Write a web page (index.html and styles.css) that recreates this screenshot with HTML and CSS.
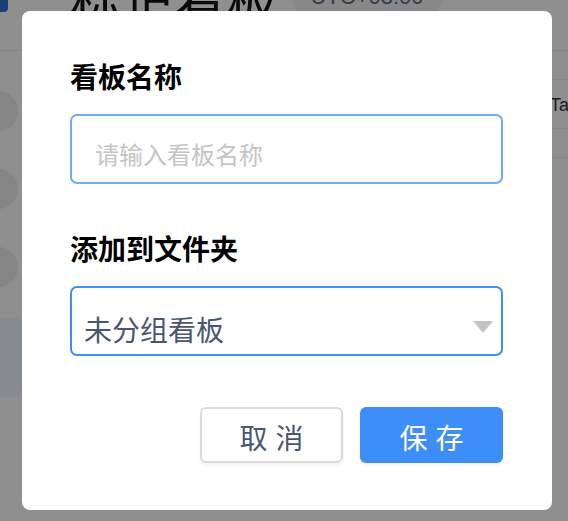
FILE: index.html
```html
<!DOCTYPE html>
<html lang="zh-CN">
<head>
  <meta charset="UTF-8" />
  <meta name="viewport" content="width=device-width, initial-scale=1.0" />
  <title>新建看板</title>
  <link rel="stylesheet" href="styles.css">
</head>
<body>
  <!-- 背景页面 -->
  <div class="page">
    <div class="header">
      <div class="logo-btn"></div>
      <div class="page-title">标记看板</div>
      <div class="tz-pill">UTC+08:00</div>
    </div>
    <div class="page-body">
      <div class="side">
        <div class="avatar"></div>
        <div class="avatar"></div>
        <div class="avatar"></div>
        <div class="side-active"></div>
      </div>
      <div class="main">
        <div class="row"></div>
        <div class="row row-text">Ta</div>
        <div class="row"></div>
      </div>
    </div>
  </div>

  <!-- 弹窗 -->
  <div class="mask">
    <div class="dialog">
      <div class="field">
        <div class="field-label">看板名称</div>
        <input class="text-input" type="text" placeholder="请输入看板名称" />
      </div>

      <div class="field">
        <div class="field-label">添加到文件夹</div>
        <div class="select">
          <span class="select-value">未分组看板</span>
          <span class="select-arrow"></span>
        </div>
      </div>

      <div class="actions">
        <button class="btn btn-cancel">取消</button>
        <button class="btn btn-save">保存</button>
      </div>
    </div>
  </div>
</body>
</html>
```

FILE: styles.css
```css
body {
  margin: 0;
  font-family: "Noto Sans CJK SC", "Noto Sans", sans-serif;
  background-color: #fff;
  overflow: hidden;
}

/* 背景页面 */
.page {
  width: 568px;
  height: 521px;
}

.header {
  display: flex;
  align-items: flex-start;
  height: 50px;
  border-bottom: 1px solid #eaecef;
}

.logo-btn {
  width: 8px;
  height: 12px;
  background-color: #2f6fd6;
  border-radius: 0 0 4px 0;
}

.page-title {
  margin: -30px 0 0 62px;
  font-size: 52px;
  line-height: 60px;
  color: #111;
}

.tz-pill {
  margin: -20px 0 0 14px;
  width: 150px;
  height: 36px;
  border-radius: 18px;
  background-color: #f3f3f3;
  color: #5a6b86;
  font-family: "Liberation Sans", sans-serif;
  font-size: 22px;
  text-align: center;
  line-height: 34px;
}

.page-body {
  display: flex;
}

.side {
  width: 40px;
  display: flex;
  flex-direction: column;
  padding-top: 40px;
}

.avatar {
  width: 40px;
  height: 40px;
  margin-left: -22px;
  margin-bottom: 38px;
  border-radius: 50%;
  background-color: #eee;
}

.side-active {
  margin-top: -8px;
  width: 40px;
  height: 80px;
  background-color: #f0f6fd;
}

.main {
  flex: 1;
}

.row {
  height: 28px;
  border-bottom: 1px solid #eceef2;
}

.row-text {
  height: 48px;
  padding-left: 510px;
  font-family: "Liberation Sans", sans-serif;
  font-size: 18px;
  line-height: 50px;
  color: #333;
  white-space: nowrap;
}

/* 遮罩 */
.mask {
  position: fixed;
  inset: 0;
  background-color: rgba(0, 0, 0, 0.44);
  display: flex;
  align-items: center;
  padding-left: 22px;
}

.dialog {
  width: 530px;
  height: 499px;
  box-sizing: border-box;
  background-color: #fff;
  border-radius: 8px;
  padding: 48px 49px 0 48px;
}

.field {
  margin-bottom: 47px;
}

.field-label {
  font-size: 28px;
  font-weight: bold;
  line-height: 34px;
  color: #000;
  margin-bottom: 21px;
}

.text-input,
.select {
  display: flex;
  align-items: center;
  width: 100%;
  height: 70px;
  box-sizing: border-box;
  border-radius: 7px;
  font-family: "Noto Sans CJK SC", sans-serif;
  outline: none;
}

.text-input {
  border: 2px solid #69acf9;
  padding: 8px 23px 0;
  font-size: 24px;
}

.text-input::placeholder {
  color: #c4c4c4;
}

.select {
  border: 2px solid #3c8ef8;
  padding: 0 8px 0 12px;
  justify-content: space-between;
}

.select-value {
  font-size: 28px;
  color: #4a5670;
  padding-top: 16px;
}

.select-arrow {
  margin-top: 11px;
  width: 0;
  height: 0;
  border-left: 10px solid transparent;
  border-right: 10px solid transparent;
  border-top: 12px solid #c3c3c3;
}

.actions {
  display: flex;
  justify-content: flex-end;
  gap: 17px;
  margin-top: 51px;
}

.btn {
  width: 143px;
  height: 56px;
  box-sizing: border-box;
  border-radius: 6px;
  font-family: "Noto Sans CJK SC", sans-serif;
  font-size: 28px;
  letter-spacing: 8px;
  padding: 4px 0 0 8px;
  box-shadow: 0 3px 3px rgba(0, 0, 0, 0.04);
}

.btn-cancel {
  background-color: #fff;
  border: 2px solid #dadada;
  color: #4a5670;
}

.btn-save {
  background-color: #3d8ef8;
  border: none;
  color: #fff;
}
```
